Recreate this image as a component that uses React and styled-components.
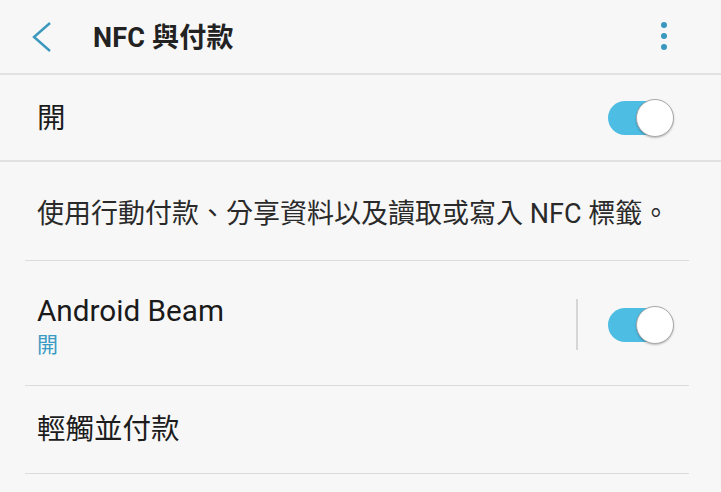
import React from "react";
import styled, { createGlobalStyle } from "styled-components";

const Global = createGlobalStyle`
  html, body { margin: 0; padding: 0; background: #f7f7f7; }
  body { font-family: Roboto, "Noto Sans CJK TC", sans-serif; color: #1c1c1c; }
  * { box-sizing: border-box; }
`;

const Page = styled.div`
  width: 721px;
  height: 492px;
  background: #f7f7f7;
  overflow: hidden;
  display: flex;
  flex-direction: column;
`;

const Header = styled.header`
  height: 75px;
  display: flex;
  align-items: center;
  border-bottom: 2px solid #e1e1e1;
  padding: 0 0 0 31px;
`;

const BackButton = styled.button`
  border: 0;
  background: none;
  padding: 0;
  width: 22px;
  height: 30px;
  display: flex;
  align-items: center;
  margin-right: 40px;
`;

const Title = styled.h1`
  margin: 0;
  flex: 1;
  font-size: 27px;
  font-weight: 700;
  color: #222;
  letter-spacing: 0.2px;
  padding-bottom: 3px;
`;

const MenuButton = styled.button`
  border: 0;
  background: none;
  padding: 0;
  width: 14px;
  margin-right: 50px;
  display: flex;
  flex-direction: column;
  align-items: center;
  gap: 5px;
  padding-bottom: 2px;
`;

const Dot = styled.span`
  width: 6px;
  height: 6px;
  border-radius: 50%;
  background: #3a97bd;
`;

const MasterRow = styled.div`
  height: 87px;
  display: flex;
  align-items: center;
  justify-content: space-between;
  padding: 0 48px 0 37px;
  border-bottom: 2px solid #e1e1e1;
`;

const Label = styled.div`
  font-size: 28.5px;
  color: #1c1c1c;
  line-height: 1.2;
  padding-top: ${(p) => p.$pt || 0}px;
`;

const Section = styled.div`
  padding: 0 32px 0 25px;
`;

const Description = styled.div`
  height: 99px;
  display: flex;
  align-items: center;
  padding: 2px 0 2px 12px;
  font-size: 27px;
  color: #2a2a2a;
  border-bottom: 1px solid #dcdcdc;
  white-space: nowrap;
`;

const Row = styled.div`
  height: ${(p) => p.$h}px;
  display: flex;
  align-items: center;
  padding-left: 12px;
  border-bottom: 1px solid #dcdcdc;
`;

const TextCol = styled.div`
  flex: 1;
  display: flex;
  flex-direction: column;
  padding-top: 8px;
`;

const BeamTitle = styled.div`
  font-size: 29.7px;
  color: #1a1a1a;
  line-height: 36px;
`;

const Sub = styled.div`
  font-size: 21px;
  color: #3a9bc2;
  line-height: 32px;
`;

const VDivider = styled.div`
  width: 2px;
  height: 51px;
  background: #d6d6d6;
  margin: 2px 30px 0 0;
`;

const Track = styled.div`
  position: relative;
  width: 65px;
  height: 34px;
  border-radius: 17px;
  background: #4dbde4;
  margin-right: ${(p) => p.$mr}px;
  margin-top: ${(p) => p.$mt}px;
`;

const Knob = styled.div`
  position: absolute;
  right: -1px;
  top: -2px;
  width: 38px;
  height: 38px;
  border-radius: 50%;
  background: #fff;
  border: 1.5px solid #a9a9a9;
  box-shadow: 0 1px 2px rgba(0, 0, 0, 0.25);
`;

const Toggle = ({ mr = 0, mt = 0 }) => (
  <Track $mr={mr} $mt={mt}>
    <Knob />
  </Track>
);

export default function App() {
  return (
    <>
      <Global />
      <Page>
        <Header>
          <BackButton aria-label="back">
            <svg width="22" height="32" viewBox="0 0 22 32">
              <path d="M19 2 L3 16 L19 30" fill="none" stroke="#3a97bd" strokeWidth="2.4" />
            </svg>
          </BackButton>
          <Title>NFC 與付款</Title>
          <MenuButton aria-label="more">
            <Dot />
            <Dot />
            <Dot />
          </MenuButton>
        </Header>
        <MasterRow>
          <Label $pt={3}>開</Label>
          <Toggle />
        </MasterRow>
        <Section>
          <Description>使用行動付款、分享資料以及讀取或寫入 NFC 標籤。</Description>
          <Row $h={125}>
            <TextCol>
              <BeamTitle>Android Beam</BeamTitle>
              <Sub>開</Sub>
            </TextCol>
            <VDivider />
            <Toggle mr={16} mt={4} />
          </Row>
          <Row $h={88}>
            <Label $pt={2}>輕觸並付款</Label>
          </Row>
        </Section>
      </Page>
    </>
  );
}
